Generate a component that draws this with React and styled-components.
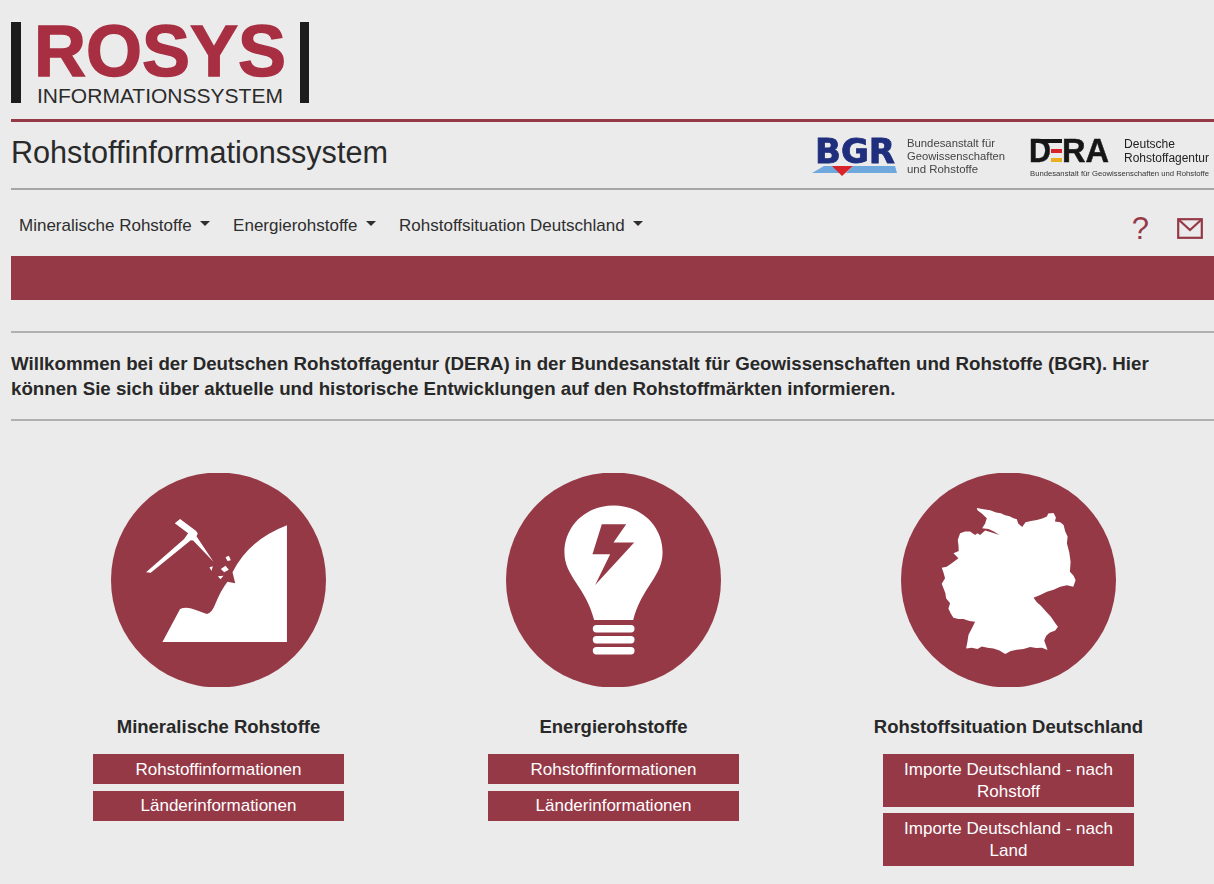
import React from "react";
import styled, { createGlobalStyle } from "styled-components";

const GlobalStyle = createGlobalStyle`
  html, body {
    margin: 0;
    padding: 0;
    background: #ebebeb;
    color: #282828;
    font-family: "Liberation Sans", Arial, sans-serif;
  }
`;

const BURGUNDY = "#953947";

const sections = [
  {
    title: "Mineralische Rohstoffe",
    icon: "mining",
    links: ["Rohstoffinformationen", "Länderinformationen"],
  },
  {
    title: "Energierohstoffe",
    icon: "bulb",
    links: ["Rohstoffinformationen", "Länderinformationen"],
  },
  {
    title: "Rohstoffsituation Deutschland",
    icon: "germany",
    links: ["Importe Deutschland - nach Rohstoff", "Importe Deutschland - nach Land"],
  },
];

const RosysLogo = () => (
  <svg width="300" height="119" viewBox="11 0 300 119">
    <rect x="11" y="22" width="10" height="81" fill="#1c1c1c" />
    <rect x="300" y="22" width="9" height="81" fill="#1c1c1c" />
    <text x="34" y="75.5" fontSize="73" fontWeight="700" fill="#a82f42" stroke="#a82f42" strokeWidth="1.4" textLength="252" lengthAdjust="spacingAndGlyphs" fontFamily="Liberation Sans">
      ROSYS
    </text>
    <text x="37" y="103" fontSize="20" fill="#2b2b2b" textLength="246" lengthAdjust="spacingAndGlyphs" fontFamily="Liberation Sans">
      INFORMATIONSSYSTEM
    </text>
  </svg>
);

const BgrLogo = () => (
  <svg width="196" height="66" viewBox="811 122 196 66">
    <text x="815" y="163" fontSize="34" fontWeight="700" fill="#1f2f7e" stroke="#1f2f7e" strokeWidth="0.8" textLength="80" lengthAdjust="spacingAndGlyphs" fontFamily="DejaVu Sans">
      BGR
    </text>
    <polygon points="812,173 824,166 834,166 843,173" fill="#6fa8dc" />
    <polygon points="846,173 853,166 895,166 897,173" fill="#6fa8dc" />
    <polygon points="832,166 853,166 842,176" fill="#d8232a" />
    <g fontSize="11.5" fill="#444" fontFamily="Liberation Sans">
      <text x="907" y="147" textLength="88" lengthAdjust="spacingAndGlyphs">Bundesanstalt für</text>
      <text x="907" y="160" textLength="98" lengthAdjust="spacingAndGlyphs">Geowissenschaften</text>
      <text x="907" y="173" textLength="71" lengthAdjust="spacingAndGlyphs">und Rohstoffe</text>
    </g>
  </svg>
);

const DeraLogo = () => (
  <svg width="182" height="66" viewBox="1029 122 182 66">
    <g fontSize="33" fontWeight="700" fill="#161616" stroke="#161616" strokeWidth="0.5" fontFamily="Liberation Sans">
      <text x="1029" y="162" textLength="22" lengthAdjust="spacingAndGlyphs">D</text>
      <text x="1062" y="162" textLength="47" lengthAdjust="spacingAndGlyphs">RA</text>
    </g>
    <rect x="1031" y="139" width="31" height="4" fill="#161616" />
    <rect x="1051" y="149" width="11" height="4" fill="#d8232a" />
    <rect x="1051" y="158" width="11" height="4" fill="#e8b020" />
    <g fontSize="12" fill="#222" fontFamily="Liberation Sans">
      <text x="1124" y="148" textLength="51" lengthAdjust="spacingAndGlyphs">Deutsche</text>
      <text x="1124" y="162" textLength="85" lengthAdjust="spacingAndGlyphs">Rohstoffagentur</text>
    </g>
    <text x="1030" y="176" fontSize="7.4" fill="#333" textLength="179" lengthAdjust="spacingAndGlyphs" fontFamily="Liberation Sans">
      Bundesanstalt für Geowissenschaften und Rohstoffe
    </text>
  </svg>
);

const MailIcon = () => (
  <svg width="26" height="21" viewBox="0 0 26 21" fill="none" stroke={BURGUNDY} strokeWidth="2.2">
    <rect x="1.2" y="1.2" width="23.6" height="18.6" />
    <path d="M1.5 1.5 L13 12 L24.5 1.5" />
  </svg>
);

// die Icons sind in Koordinaten des 3x-Ausschnitts gezeichnet
const MiningIcon = () => (
  <>
    <path
      d="M187 531 L240 432 Q258 424 285 434 L320 447 Q335 445 345 418 Q362 375 382 350 L405 355 L397 322 Q445 225 560 181 L560 531 Z"
      fill="#fff"
    />
    <path
      d="M224 175 L240 162 L288 198 L293 206 L289 214 L340 290 L279 227 L272 226 L152 323 L138 322 L252 222 L264 205 Z"
      fill="#fff"
    />
    <path d="M362 312 L376 302 L386 314 L372 322 Z M376 277 L386 272 L392 286 L382 288 Z M328 307 L338 304 L334 318 Z M353 334 L370 332 L361 343 Z" fill="#fff" />
  </>
);

const BulbIcon = () => (
  <>
    <path
      d="M355 122 C440 122 502 185 502 262 C502 335 440 365 414 465 L297 465 C272 365 208 335 208 262 C208 185 270 122 355 122 Z"
      fill="#fff"
    />
    <path d="M320 178 L393 178 L355 233 L417 233 L300 360 L345 268 L292 268 Z" fill={BURGUNDY} />
    <rect x="293" y="480" width="125" height="22" rx="11" fill="#fff" />
    <rect x="293" y="513" width="125" height="22" rx="11" fill="#fff" />
    <rect x="293" y="546" width="125" height="22" rx="11" fill="#fff" />
  </>
);

const GermanyIcon = () => (
  <path
    fill="#fff"
    d="M260 129 L280 133 L300 136 L318 143 L332 145 L345 151 L358 154 L370 160 L380 163 L384 176 L396 186 L406 172 L422 168 L440 165 L456 161 L470 155 L474 146 L490 144 L497 158 L494 170 L510 172 L520 180 L525 200 L532 215 L530 236 L537 262 L541 290 L539 320 L550 332 L556 346 L549 365 L530 361 L510 365 L490 374 L470 380 L450 390 L430 398 L440 412 L452 422 L468 440 L482 455 L492 470 L503 485 L495 496 L478 503 L468 512 L462 526 L472 555 L455 548 L438 549 L420 546 L400 552 L380 554 L362 558 L345 567 L328 556 L310 550 L292 548 L275 544 L262 552 L245 548 L228 550 L232 530 L235 510 L245 490 L255 470 L238 468 L220 462 L205 462 L190 458 L182 445 L175 430 L180 415 L168 400 L166 385 L155 356 L165 340 L160 322 L155 308 L170 305 L185 295 L205 280 L190 265 L206 258 L205 240 L203 225 L210 205 L225 200 L240 200 L255 210 L262 205 L270 210 L285 197 L305 203 L328 210 L310 199 L295 192 L276 190 L285 176 L290 160 L275 146 L262 136 Z"
  />
);

const icons = { mining: MiningIcon, bulb: BulbIcon, germany: GermanyIcon };

const App = () => (
  <>
    <GlobalStyle />
    <Page>
      <LogoRow>
        <RosysLogo />
      </LogoRow>
      <TitleRow>
        <PageTitle>Rohstoffinformationssystem</PageTitle>
        <Partners>
          <BgrLogo />
          <DeraLogo />
        </Partners>
      </TitleRow>
      <NavRow>
        <NavList>
          <NavItem>Mineralische Rohstoffe</NavItem>
          <NavItem>Energierohstoffe</NavItem>
          <NavItem>Rohstoffsituation Deutschland</NavItem>
        </NavList>
        <NavTools>
          <HelpMark>?</HelpMark>
          <MailIcon />
        </NavTools>
      </NavRow>
      <ColorBar />
      <Intro>
        Willkommen bei der Deutschen Rohstoffagentur (DERA) in der Bundesanstalt für
        Geowissenschaften und Rohstoffe (BGR). Hier können Sie sich über aktuelle und
        historische Entwicklungen auf den Rohstoffmärkten informieren.
      </Intro>
      <Columns>
        {sections.map((section) => {
          const Icon = icons[section.icon];
          return (
            <Column key={section.title}>
              <svg width="215" height="214" viewBox="33 25 644 640">
                <circle cx="355" cy="345" r="322" fill={BURGUNDY} />
                <Icon />
              </svg>
              <ColumnTitle>{section.title}</ColumnTitle>
              {section.links.map((link) => (
                <LinkButton key={link}>{link}</LinkButton>
              ))}
            </Column>
          );
        })}
      </Columns>
    </Page>
  </>
);

export default App;

const Page = styled.div`
  padding-left: 11px;
  height: 884px;
  overflow: hidden;
  box-sizing: border-box;
`;

const LogoRow = styled.header`
  height: 119px;

  svg {
    display: block;
  }
`;

const TitleRow = styled.div`
  display: flex;
  justify-content: space-between;
  align-items: center;
  height: 66px;
  border-top: 3px solid ${BURGUNDY};
  border-bottom: 2px solid #a6a6a6;
`;

const PageTitle = styled.h1`
  margin: 0 0 6px;
  font-size: 30.6px;
  font-weight: 400;
  line-height: 36px;
  color: #2a2a2a;
`;

const Partners = styled.div`
  display: flex;
  align-items: center;
  gap: 22px;
  padding-right: 3px;

  svg {
    display: block;
    filter: blur(0.3px);
  }
`;

const NavRow = styled.nav`
  display: flex;
  justify-content: space-between;
  height: 66px;
`;

const NavList = styled.ul`
  display: flex;
  margin: 0;
  padding: 24px 0 0;
  list-style: none;
`;

const NavItem = styled.li`
  padding: 0 15px 0 8px;
  font-size: 17px;
  line-height: 24px;
  color: #2e2e2e;

  &::after {
    content: "";
    display: inline-block;
    margin-left: 8.5px;
    vertical-align: 5px;
    border-top: 5px solid #2e2e2e;
    border-left: 5px solid transparent;
    border-right: 5px solid transparent;
  }
`;

const NavTools = styled.div`
  display: flex;
  align-items: flex-start;
  gap: 28px;
  padding: 28px 11px 0 0;
`;

const HelpMark = styled.span`
  margin-top: -7px;
  font-size: 31px;
  line-height: 36px;
  color: ${BURGUNDY};
`;

const ColorBar = styled.div`
  height: 44px;
  background: ${BURGUNDY};
`;

const Intro = styled.p`
  margin: 31px 0 0;
  padding: 18px 50px 18px 0;
  border-top: 2px solid #b0b0b0;
  border-bottom: 2px solid #b0b0b0;
  font-size: 18.72px;
  font-weight: 700;
  line-height: 25px;
  color: #282828;
`;

const Columns = styled.section`
  display: grid;
  grid-template-columns: repeat(3, 395px);
  padding: 52px 0 0 10px;
`;

const Column = styled.article`
  display: flex;
  flex-direction: column;
  align-items: center;

  svg {
    display: block;
  }
`;

const ColumnTitle = styled.h2`
  margin: 28px 0 15px;
  font-size: 18.5px;
  font-weight: 700;
  line-height: 24px;
  color: #282828;
`;

const LinkButton = styled.a`
  display: block;
  box-sizing: border-box;
  width: 251px;
  margin-bottom: 6.5px;
  padding: 4.75px 14px 2.75px;
  background: ${BURGUNDY};
  color: #fff;
  font-size: 17px;
  line-height: 22.5px;
  text-align: center;
`;
